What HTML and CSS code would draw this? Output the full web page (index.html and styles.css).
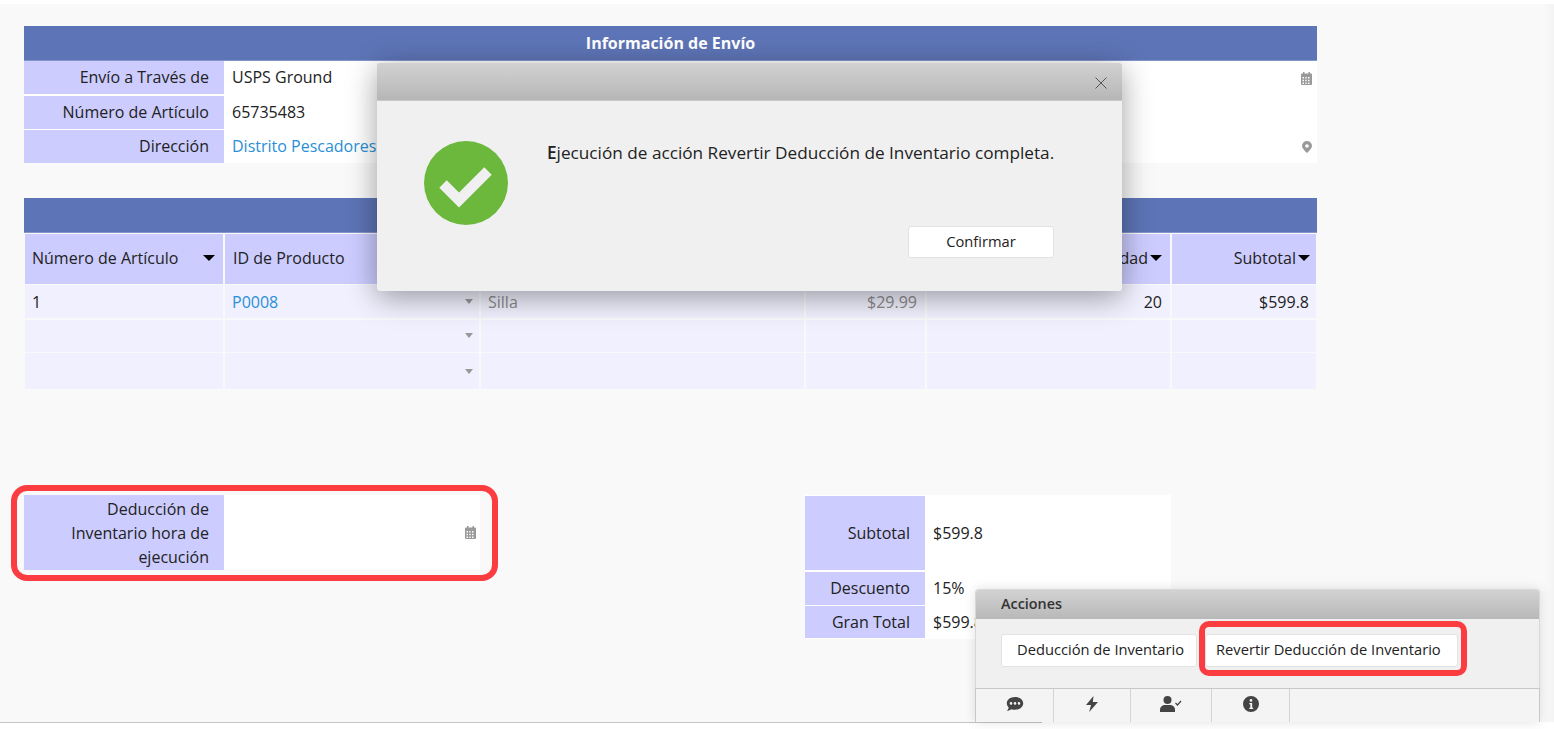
FILE: index.html
```html
<!DOCTYPE html>
<html lang="es">
<head>
<meta charset="utf-8">
<title>Información de Envío</title>
<link rel="stylesheet" href="styles.css">
</head>
<body>
<div class="page">
  <main class="form">
    <section>
      <h2 class="bar">Información de Envío</h2>
      <div class="fields">
        <div class="label">Envío a Través de</div>
        <div class="value">USPS Ground
          <svg class="ficon cal" viewBox="0 0 11 13"><path d="M2 0h1.500v1.500h4V0H9v1.500h1a1 1 0 0 1 1 1V12a1 1 0 0 1-1 1H1a1 1 0 0 1-1-1V2.500a1 1 0 0 1 1-1h1zM1.500 5v1.500H3V5zm2.800 0v1.500h1.400V5zM7 5v1.500h1.500V5zM1.500 7.800v1.400H3V7.800zm2.800 0v1.400h1.400V7.800zm2.700 0v1.400h1.500V7.800zm-5.500 2.700V12H3v-1.500zm2.800 0V12h1.400v-1.500zm2.700 0V12h1.500v-1.500z" fill-rule="evenodd"/></svg>
        </div>
        <div class="label">Número de Artículo</div>
        <div class="value">65735483</div>
        <div class="label">Dirección</div>
        <div class="value"><a class="link">Distrito Pescadores</a>
          <svg class="ficon pin" viewBox="0 0 10 12"><path d="M5 0a5 5 0 0 0-5 5c0 2.600 5 7 5 7s5-4.400 5-7a5 5 0 0 0-5-5zm0 6.800a1.800 1.800 0 1 1 0-3.600 1.800 1.800 0 0 1 0 3.600z" fill-rule="evenodd"/></svg>
        </div>
      </div>
    </section>

    <section class="items-section">
      <h2 class="bar">Lista de Productos</h2>
      <div class="items">
        <div class="th">Número de Artículo <i class="caret"></i></div>
        <div class="th second">ID de Producto <i class="caret"></i></div>
        <div class="th">Nombre de Producto <i class="caret"></i></div>
        <div class="th end">Precio <i class="caret"></i></div>
        <div class="th end">Cantidad<i class="caret"></i></div>
        <div class="th end last">Subtotal<i class="caret"></i></div>

        <div class="td">1</div>
        <div class="td pick"><a class="link">P0008</a><i class="mini"></i></div>
        <div class="td muted">Silla</div>
        <div class="td end muted">$29.99</div>
        <div class="td end">20</div>
        <div class="td end last">$599.8</div>

        <div class="td"></div>
        <div class="td pick"><i class="mini"></i></div>
        <div class="td"></div><div class="td"></div><div class="td"></div><div class="td"></div>

        <div class="td tall"></div>
        <div class="td tall pick"><i class="mini"></i></div>
        <div class="td tall"></div><div class="td tall"></div><div class="td tall"></div><div class="td tall"></div>
      </div>
    </section>

    <section class="lower">
      <div class="deduct">
        <div class="label multi">Deducción de Inventario hora de ejecución</div>
        <div class="value">
          <svg class="ficon cal" viewBox="0 0 11 13"><path d="M2 0h1.500v1.500h4V0H9v1.500h1a1 1 0 0 1 1 1V12a1 1 0 0 1-1 1H1a1 1 0 0 1-1-1V2.500a1 1 0 0 1 1-1h1zM1.500 5v1.500H3V5zm2.800 0v1.500h1.400V5zM7 5v1.500h1.500V5zM1.500 7.800v1.400H3V7.800zm2.800 0v1.400h1.400V7.800zm2.700 0v1.400h1.500V7.800zm-5.500 2.700V12H3v-1.500zm2.800 0V12h1.400v-1.500zm2.700 0V12h1.500v-1.500z" fill-rule="evenodd"/></svg>
        </div>
        <span class="mark mark-field"></span>
      </div>
      <div class="summary">
        <div class="label">Subtotal</div><div class="value">$599.8</div>
        <div class="label">Descuento</div><div class="value">15%</div>
        <div class="label">Gran Total</div><div class="value">$599.8</div>
      </div>
    </section>
  </main>

  <aside class="actions">
    <header class="actions-head">Acciones</header>
    <div class="actions-body">
      <button class="btn">Deducción de Inventario</button>
      <button class="btn mark-host">Revertir Deducción de Inventario<span class="mark mark-btn"></span></button>
    </div>
    <nav class="tabs">
      <span class="tab t1"><svg viewBox="0 0 18 16"><path d="M9 1C4.300 1 .8 3.800.8 7.300c0 1.600.7 3 1.900 4.100-.2 1.300-1 2.500-1.900 3.300 1.800 0 3.500-.7 4.600-1.500 1.100.4 2.300.6 3.600.6 4.700 0 8.200-2.900 8.200-6.500S13.700 1 9 1zM5 8.700a1.300 1.300 0 1 1 0-2.600 1.300 1.300 0 0 1 0 2.600zm4 0a1.300 1.300 0 1 1 0-2.600 1.300 1.300 0 0 1 0 2.600zm4 0a1.300 1.300 0 1 1 0-2.600 1.300 1.300 0 0 1 0 2.600z" fill-rule="evenodd"/></svg></span>
      <span class="tab t2"><svg viewBox="0 0 14 16"><path d="M8.500 0 1 9h5l-1.800 7L13 6H7.800z"/></svg></span>
      <span class="tab t3"><svg viewBox="0 0 22 16"><circle cx="7.500" cy="4" r="4"/><path d="M0 16v-2.500C0 11 2.500 9 5 9h5c2.500 0 5 2 5 4.500V16z"/><path d="m15.500 7 2 2 3.500-4" fill="none" stroke="currentColor" stroke-width="1.200"/></svg></span>
      <span class="tab t4"><svg viewBox="0 0 16 16"><path d="M8 0a8 8 0 1 0 0 16A8 8 0 0 0 8 0zm0 3a1.400 1.400 0 1 1 0 2.800A1.400 1.400 0 0 1 8 3zM6.300 7h2.900v4.700h1V13H6.300v-1.300h1V8.300h-1z" fill-rule="evenodd"/></svg></span>
    </nav>
  </aside>

  <div class="dialog" role="dialog">
    <header class="dialog-head">
      <svg class="close" viewBox="0 0 12 12"><path d="m.5.500 11 11m0-11-11 11" fill="none" stroke="currentColor" stroke-width="1"/></svg>
    </header>
    <div class="dialog-body">
      <svg class="ok" viewBox="0 0 84 84"><circle cx="42" cy="42" r="42" fill="#6cb83c"/><path d="m19 43 16 16 29-29" fill="none" stroke="#f0f0f0" stroke-width="10.500" stroke-linejoin="miter"/></svg>
      <div class="dialog-main">
        <p class="dialog-text"><b class="initial">E</b>jecución de acción Revertir Deducción de Inventario completa.</p>
        <div class="dialog-foot"><button class="btn wide">Confirmar</button></div>
      </div>
    </div>
  </div>
</div>
<div class="baseline"></div>
</body>
</html>
```
FILE: styles.css
```css
* { box-sizing: border-box; }
html, body { margin: 0; height: 100%; overflow: hidden; }
body {
  background: #fff;
  color: #222;
  font: 16px/24px "Open Sans", "Noto Sans", sans-serif;
  padding-top: 4px;
}
.page {
  position: relative;
  height: 718px;
  padding: 22px 0 0 24px;
  background: linear-gradient(90deg, #f9f9f9 1543px, #f4f4f4 1554px);
}
.baseline { width: 1042px; height: 1px; background: #c4c4c4; }
.form { width: 1293px; }
section { margin: 0; }
.bar {
  margin: 0;
  height: 35px;
  padding-top: 1px;
  background: #5d74b6;
  border-bottom: 1px solid #8396cc;
  color: #fff;
  font-size: 16px;
  font-weight: 700;
  line-height: 32px;
  text-align: center;
}
.fields {
  display: grid;
  grid-template-columns: 200px 1fr;
  grid-auto-rows: 33px;
  row-gap: 1.500px;
  background: #fff;
}
.fields .label, .fields .value { padding-bottom: 1px; }
.fields .ficon { margin-top: 2px; }
.label {
  display: flex;
  align-items: center;
  justify-content: flex-end;
  padding-right: 15px;
  background: #ccf;
  text-align: right;
}
.value {
  display: flex;
  align-items: center;
  justify-content: space-between;
  padding: 0 5px 0 7px;
  margin-left: 1px;
  background: #fff;
}
.link { color: #2a8fd6; }
.ficon { fill: #999; flex: none; margin-left: auto; }
.cal { width: 11px; height: 13px; }
.pin { width: 10px; height: 12px; }
.deduct .cal { margin-right: -1px; }
.summary .value { padding-left: 8px; }
.items-section { margin-top: 35px; }
.items-section .bar { color: #5d74b6; }
.items {
  display: grid;
  grid-template-columns: 198px 254px 323px 119px 243px 144px;
  grid-template-rows: 50px 33px 32px 36px;
  gap: 1.500px 2px;
  padding: 0 1px;
  margin-top: .500px;
}
.th {
  display: flex;
  align-items: center;
  justify-content: space-between;
  padding: 0 8px 1px 7px;
  background: #ccf;
}
.th.second { padding-left: 8px; }
.th.end { justify-content: flex-end; padding-right: 8px; }
.th.last { padding-right: 6px; }
.caret {
  width: 0;
  height: 0;
  margin-left: 2px;
  border: 6px solid transparent;
  border-top: 6px solid #000;
  border-bottom: 0;
}
.td {
  display: flex;
  align-items: center;
  justify-content: space-between;
  padding: 0 8px 0 7px;
  background: #f0f0fe;
}
.td.end { justify-content: flex-end; }
.td.last { padding-right: 7px; }
.muted { color: #8a8a8a; }
.pick { position: relative; }
.mini {
  margin-left: auto;
  margin-right: -2px;
  width: 0;
  height: 0;
  border: 4px solid transparent;
  border-top: 5px solid #999;
  border-bottom: 0;
}
.lower {
  display: flex;
  justify-content: space-between;
  width: 1147px;
  margin-top: 106px;
}
.deduct {
  position: relative;
  display: grid;
  grid-template-columns: 200px 256px;
  height: 75px;
  background: #fff;
}
.multi { padding-left: 30px; }
.summary {
  display: grid;
  grid-template-columns: 120px 246px;
  grid-template-rows: 74px 33px 32px;
  row-gap: 1.500px;
  align-self: flex-start;
  width: 366px;
  margin-left: auto;
  background: #fff;
  padding: 1px 0;
}
.summary .value { margin-left: 0; }
.mark {
  position: absolute;
  border: 6px solid #fb3d42;
  pointer-events: none;
}
.mark-field { left: -13px; top: -10px; width: 487px; height: 96px; border-radius: 16px; }
.mark-btn { left: -7px; top: -14px; width: 268px; height: 55px; border-radius: 10px; }
.mark-host { position: relative; }
.actions {
  position: absolute;
  left: 975px;
  top: 585px;
  width: 565px;
  height: 133px;
  display: flex;
  flex-direction: column;
  background: #f0f0f0;
  border: 1px solid #d8d8d8;
  border-bottom: 0;
  border-radius: 4px 4px 0 0;
  box-shadow: 0 0 12px rgba(0, 0, 0, .12);
  overflow: visible;
}
.actions-head {
  height: 29px;
  padding-left: 25px;
  background: linear-gradient(#d2d2d2, #b8b8b8);
  border-radius: 3px 3px 0 0;
  color: #333;
  font-size: 14.400px;
  font-weight: 600;
  line-height: 28px;
}
.actions-body {
  display: flex;
  gap: 8px;
  flex: 1;
  padding: 15px 0 0 25px;
  align-items: flex-start;
}
.btn {
  height: 33px;
  padding: 0 15px 3px;
  border: 1px solid #e2e2e2;
  border-radius: 3px;
  background: #fff;
  color: #222;
  font: 14.700px/28px "Open Sans", "Noto Sans", sans-serif;
  white-space: nowrap;
}
.actions .btn:first-child { width: 196px; }
.actions .btn:last-child { width: 253px; padding: 0 6px 3px 10px; text-align: left; }
.tabs {
  display: flex;
  height: 34px;
  background: #f4f4f4;
  border-top: 1px solid #c8c8c8;
  margin: 0 -1px;
  border-left: 1px solid #c8c8c8;
  border-right: 1px solid #c8c8c8;
}
.tab {
  display: flex;
  align-items: center;
  justify-content: center;
  height: 100%;
  padding-bottom: 3px;
  border-right: 1px solid #d4d4d4;
  color: #444;
}
.tab svg { fill: currentColor; height: 16px; }
.t1 { width: 78px; }
.t1 svg { width: 18px; }
.t2 { width: 77px; }
.t2 svg { width: 14px; }
.t3 { width: 81px; }
.t3 svg { width: 22px; }
.t4 { width: 78px; }
.t4 svg { width: 16px; }
.dialog {
  position: absolute;
  left: 377px;
  top: 59px;
  width: 745px;
  height: 228px;
  background: #f0f0f0;
  border-radius: 3px;
  box-shadow: 0 6px 30px rgba(0, 0, 0, .38);
}
.dialog-head {
  display: flex;
  justify-content: flex-end;
  align-items: center;
  height: 38px;
  padding: 3px 15px 0 0;
  background: linear-gradient(#d2d2d2, #b6b6b6);
  border-bottom: 1px solid #c9c9c9;
  border-radius: 3px 3px 0 0;
}
.close { width: 12px; height: 12px; color: #555; }
.dialog-body { display: flex; padding: 40px 68px 0 47px; }
.ok { width: 84px; height: 84px; flex: none; }
.dialog-main { flex: 1; margin-left: 39px; min-width: 0; }
.dialog-text { margin: 0; font-size: 17.200px; line-height: 24px; white-space: nowrap; }
.initial { font-weight: 600; }
.dialog-foot { display: flex; justify-content: flex-end; margin-top: 61px; }
.wide { width: 146px; height: 32px; padding-bottom: 2px; }
```
